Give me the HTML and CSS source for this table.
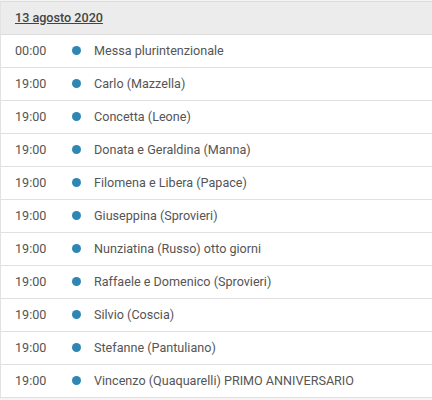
FILE: index.html
```html
<!DOCTYPE html>
<html lang="it">
<head>
<meta charset="utf-8">
<link rel="stylesheet" href="styles.css">
</head>
<body>
<div class="agenda">
  <div class="day-head"><a class="day-link">13 agosto 2020</a></div>
  <ul class="events">
    <li class="event"><span class="time">00:00</span><span class="dot"></span><span class="title">Messa plurintenzionale</span></li>
    <li class="event"><span class="time">19:00</span><span class="dot"></span><span class="title">Carlo (Mazzella)</span></li>
    <li class="event"><span class="time">19:00</span><span class="dot"></span><span class="title">Concetta (Leone)</span></li>
    <li class="event"><span class="time">19:00</span><span class="dot"></span><span class="title">Donata e Geraldina (Manna)</span></li>
    <li class="event"><span class="time">19:00</span><span class="dot"></span><span class="title">Filomena e Libera (Papace)</span></li>
    <li class="event"><span class="time">19:00</span><span class="dot"></span><span class="title">Giuseppina (Sprovieri)</span></li>
    <li class="event"><span class="time">19:00</span><span class="dot"></span><span class="title">Nunziatina (Russo) otto giorni</span></li>
    <li class="event"><span class="time">19:00</span><span class="dot"></span><span class="title">Raffaele e Domenico (Sprovieri)</span></li>
    <li class="event"><span class="time">19:00</span><span class="dot"></span><span class="title">Silvio (Coscia)</span></li>
    <li class="event"><span class="time">19:00</span><span class="dot"></span><span class="title">Stefanne (Pantuliano)</span></li>
    <li class="event"><span class="time">19:00</span><span class="dot"></span><span class="title">Vincenzo (Quaquarelli) PRIMO ANNIVERSARIO</span></li>
  </ul>
</div>
</body>
</html>
```
FILE: styles.css
```css
html, body {
  margin: 0;
  padding: 0;
}
body {
  background: #f4f4f4;
  font-family: Roboto, "Liberation Sans", sans-serif;
  font-size: 12.6px;
  color: #555;
}
.agenda {
  margin-top: 1px;
  border-top: 1px solid #dcdcdc;
  border-left: 1px solid #e2e2e2;
  background: #fff;
}
.day-head {
  box-sizing: border-box;
  height: 33px;
  background: #ececec;
  border-bottom: 1px solid #dcdcdc;
  display: flex;
  align-items: center;
  padding: 0 0 2px 14px;
}
.day-link {
  font-weight: 500;
  color: #444;
  text-decoration: underline;
}
.events {
  list-style: none;
  margin: 0;
  padding: 0;
}
.event {
  box-sizing: border-box;
  height: 33px;
  border-bottom: 1px solid #e0e0e0;
  display: flex;
  align-items: center;
  padding: 0 0 2px 14px;
}
.time {
  width: 57px;
}
.dot {
  width: 9px;
  height: 9px;
  border-radius: 50%;
  background: #2f86b3;
  margin-right: 13px;
}
.title {
  color: #555;
}
```
